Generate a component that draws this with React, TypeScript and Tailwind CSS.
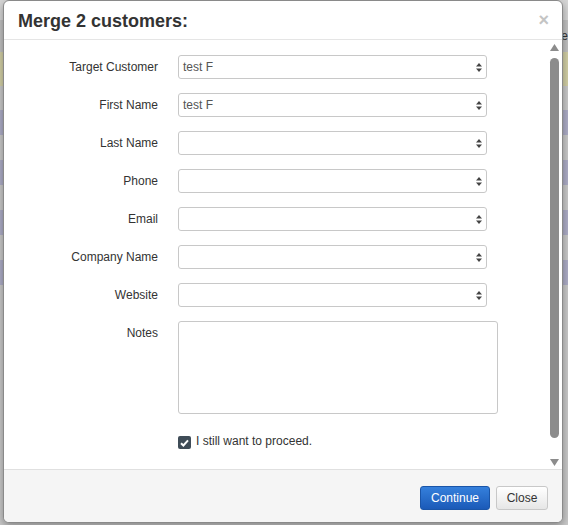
import React from "react";

const fields = ["Target Customer", "First Name", "Last Name", "Phone", "Email", "Company Name", "Website"];
const values: Record<string, string> = { "Target Customer": "test F", "First Name": "test F" };

function Arrows() {
  return (
    <svg width="6" height="9" viewBox="0 0 6 9" className="shrink-0">
      <path d="M3 0 L6 3.5 L0 3.5 Z" fill="#444" />
      <path d="M3 9 L6 5.5 L0 5.5 Z" fill="#444" />
    </svg>
  );
}

export default function App() {
  return (
    <div className="relative w-[568px] h-[525px] overflow-hidden bg-[#cfcfcf]" style={{ fontFamily: '"Liberation Sans", Arial, sans-serif' }}>
      {/* dimmed page behind */}
      <div className="flex flex-col w-full">
        <div className="h-[20px] bg-[#d6d6d6]" />
        <div className="h-[32px] bg-[#c2c2c2] flex justify-end items-center text-[12px] text-[#333]">e</div>
        <div className="h-[34px] bg-[#d3d0a6]" />
        <div className="h-[24px] bg-[#cacaca]" />
        <div className="h-[25px] bg-[#aeaec8]" />
        <div className="h-[25px] bg-[#cacaca]" />
        <div className="h-[25px] bg-[#aeaec8]" />
        <div className="h-[25px] bg-[#cacaca]" />
        <div className="h-[25px] bg-[#aeaec8]" />
        <div className="h-[25px] bg-[#cacaca]" />
        <div className="h-[25px] bg-[#aeaec8]" />
        <div className="h-[240px] bg-[#cacaca]" />
      </div>

      {/* modal */}
      <div className="absolute left-[3px] top-0 w-[560px] h-[523px] bg-white rounded-[6px] border border-[#8a8a8a] shadow-[0_3px_8px_rgba(0,0,0,0.35)] flex flex-col overflow-hidden">
        <div className="h-[39px] shrink-0 flex items-center justify-between pl-[14px] pr-[13px] border-b border-[#e5e5e5]">
          <h3 className="text-[18px] font-bold text-[#333] leading-none mt-[1px]">Merge 2 customers:</h3>
          <span className="text-[18px] font-bold text-[#c4c4c4] leading-none">×</span>
        </div>

        <div className="flex-1 flex min-h-0">
          <div className="flex-1 flex flex-col pt-[15px] gap-[14px]">
            {fields.map((f) => (
              <div key={f} className="flex items-center h-[24px]">
                <label className="w-[154px] text-right text-[12px] text-[#333]">{f}</label>
                <div className="ml-[20px] w-[309px] h-[24px] border border-[#c8c8c8] rounded-[3px] flex items-center justify-between pl-[4px] pr-[4px] text-[12px] text-[#555] bg-white">
                  <span>{values[f] ?? ""}</span>
                  <Arrows />
                </div>
              </div>
            ))}
            <div className="flex items-start">
              <label className="w-[154px] text-right text-[12px] text-[#333] mt-[3px]">Notes</label>
              <div className="ml-[20px] w-[320px] h-[93px] border border-[#c8c8c8] rounded-[3px] bg-white" />
            </div>
            <div className="flex items-center ml-[174px] mt-[7px] gap-[5px]">
              <div className="w-[13px] h-[13px] rounded-[2px] bg-[#3f4c57] flex items-center justify-center">
                <svg width="9" height="8" viewBox="0 0 9 8">
                  <path d="M1 4.2 L3.4 6.5 L8 1.3" stroke="white" strokeWidth="2" fill="none" />
                </svg>
              </div>
              <span className="text-[12px] text-[#333] -mt-[3px]">I still want to proceed.</span>
            </div>
          </div>
          <div className="w-[12px] mr-[2px] flex flex-col items-center pt-[4px] pb-[3px]">
            <svg width="9" height="7" viewBox="0 0 9 7"><path d="M4.5 0 L9 7 L0 7 Z" fill="#8c8c8c" /></svg>
            <div className="w-[9px] h-[380px] mt-[7px] rounded-full bg-[#8c8c8c]" />
            <div className="flex-1" />
            <svg width="9" height="7" viewBox="0 0 9 7"><path d="M0 0 L9 0 L4.5 7 Z" fill="#8c8c8c" /></svg>
          </div>
        </div>

        <div className="h-[53px] shrink-0 bg-[#f5f5f5] border-t border-[#e0e0e0] flex items-center justify-end gap-[6px] pr-[14px] pt-[3px]">
          <button className="w-[70px] h-[24px] rounded-[3px] border border-[#1a55a8] bg-gradient-to-b from-[#3580dc] to-[#1b5ab8] text-white text-[12px]">Continue</button>
          <button className="w-[52px] h-[24px] rounded-[3px] border border-[#c8c8c8] bg-gradient-to-b from-white to-[#e6e6e6] text-[#333] text-[12px]">Close</button>
        </div>
      </div>
    </div>
  );
}
